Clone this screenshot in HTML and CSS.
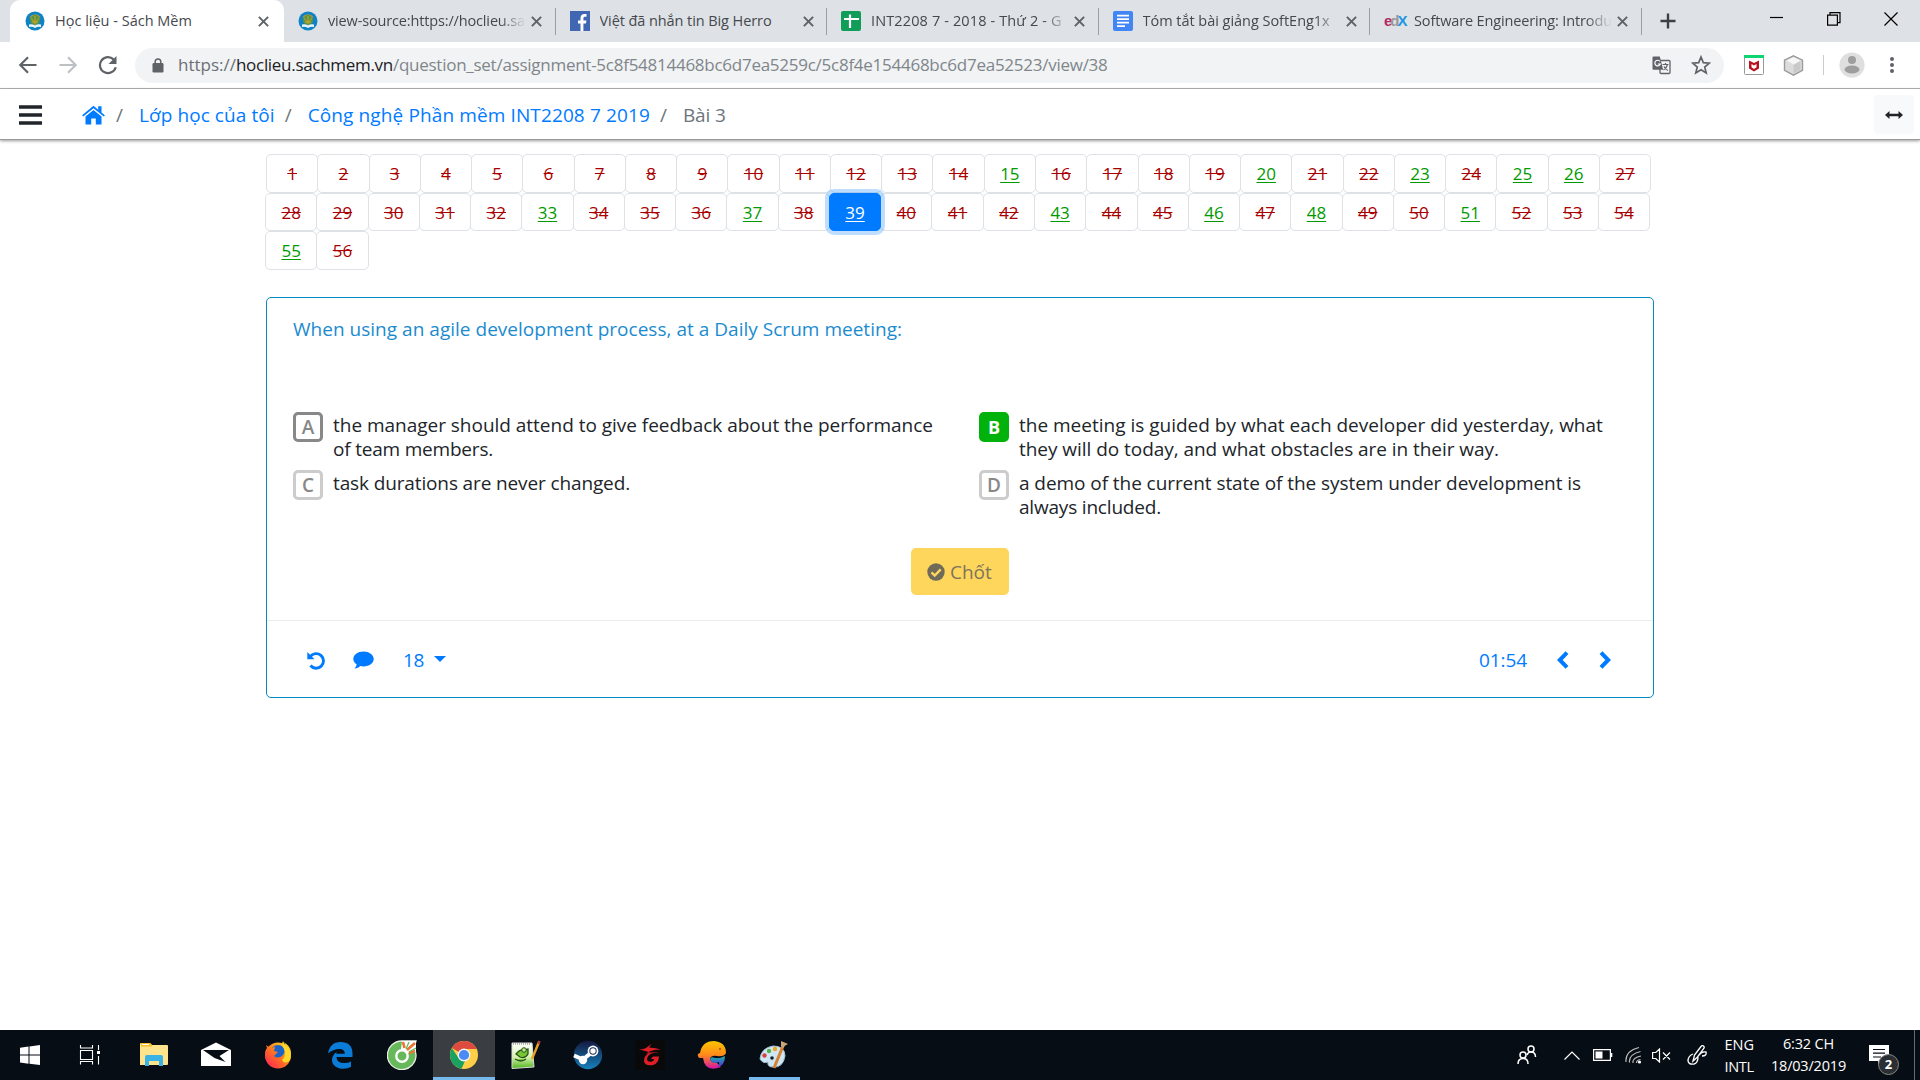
FILE: index.html
```html
<!DOCTYPE html>
<html lang="vi">
<head>
<meta charset="utf-8">
<title>Học liệu - Sách Mềm</title>
<link rel="stylesheet" href="styles.css">
</head>
<body>
<svg class="defs" width="0" height="0">
  <defs>
    <linearGradient id="fire" x1="0" y1="1" x2="1" y2="0"><stop offset="0" stop-color="#ff1f5a"/><stop offset=".5" stop-color="#ff7a1c"/><stop offset="1" stop-color="#fff02e"/></linearGradient>
    <linearGradient id="steam" x1="0" y1="0" x2="0" y2="1"><stop offset="0" stop-color="#14193f"/><stop offset="1" stop-color="#1681bd"/></linearGradient>
    <linearGradient id="whale" x1="0" y1="0" x2="0" y2="1"><stop offset="0" stop-color="#ffc400"/><stop offset=".5" stop-color="#ff8a1a"/><stop offset="1" stop-color="#d414a8"/></linearGradient>
    <linearGradient id="tail" x1="0" y1="0" x2="0" y2="1"><stop offset="0" stop-color="#18b5a8"/><stop offset="1" stop-color="#5a2be0"/></linearGradient>
    <linearGradient id="note" x1="0" y1="0" x2="0" y2="1"><stop offset="0" stop-color="#fff"/><stop offset=".55" stop-color="#d8f2b0"/><stop offset="1" stop-color="#4fb51c"/></linearGradient>
    <symbol id="book" viewBox="0 0 20 20"><circle cx="10" cy="10" r="9.500" fill="#0e84c4"/><path d="M4.500 6.500a6.500 6.500 0 0 1 11 0z" fill="#f39a1e"/><circle cx="10" cy="9" r="5" fill="#5c9440"/><path d="M6 7l4 5 4-5M10 5v9M7 11h6" stroke="#c9a22a" fill="none"/><path d="M4 13.500q3-1 6 1 3-2 6-1v2.500q-3-1-6 1-3-2-6-1z" fill="#eef6fb"/></symbol>
    <symbol id="x" viewBox="0 0 10 10"><path d="M.8.8l8.400 8.400M9.200.8L.8 9.200" stroke="#5f6368" stroke-width="1.800" fill="none"/></symbol>
  </defs>
</svg>

<header class="tabstrip">
  <div class="tab active"><svg class="fav" viewBox="0 0 20 20"><use href="#book"/></svg><span class="title"><span class="t1">Học liệu - Sách Mềm</span></span><svg class="close"><use href="#x"/></svg></div>
  <div class="tab"><svg class="fav" viewBox="0 0 20 20"><use href="#book"/></svg><span class="title fade"><span class="t2">view-source:https://hoclieu.sa</span></span><svg class="close"><use href="#x"/></svg></div>
  <div class="tab"><svg class="fav" viewBox="0 0 20 20"><path fill="#4267b2" d="M0 0h20v20H0z"/><path fill="#fff" d="M10.500 20v-7.500H8V9.500h2.500V7.200c0-2.700 1.600-4.100 4-4.100h2v2.700h-1.600c-1.200 0-1.500.6-1.500 1.600v2.100h3l-.4 3h-2.600V20z"/></svg><span class="title"><span class="t3">Việt đã nhắn tin Big Herro</span></span><svg class="close"><use href="#x"/></svg></div>
  <div class="tab"><svg class="fav" viewBox="0 0 20 20"><rect width="20" height="20" rx="2" fill="#0f9d58"/><path d="M9 3.500v13.500M3 8h15" stroke="#fff" stroke-width="2.200"/></svg><span class="title fade"><span class="t4">INT2208 7 - 2018 - Thứ 2 - G</span></span><svg class="close"><use href="#x"/></svg></div>
  <div class="tab"><svg class="fav" viewBox="0 0 20 20"><rect width="20" height="20" rx="2" fill="#4285f4"/><path d="M4 4.700h12M4 8.200h12M4 11.700h12M4 15.200h8" stroke="#fff" stroke-width="1.700"/></svg><span class="title fade"><span class="t5">Tóm tắt bài giảng SoftEng1x</span></span><svg class="close"><use href="#x"/></svg></div>
  <div class="tab"><span class="edx"><b>e</b><b>d</b><b>X</b></span><span class="title fade"><span class="t6">Software Engineering: Introdu</span></span><svg class="close"><use href="#x"/></svg></div>
  <svg class="plus" viewBox="0 0 16 16"><path d="M8 0.500v15M.5 8h15" stroke="#3c4043" stroke-width="2.400"/></svg>
  <div class="winctl">
    <svg width="14" height="14" viewBox="0 0 14 14"><path d="M0 5.500h13" stroke="#000" stroke-width="1.200"/></svg>
    <svg width="14" height="14" viewBox="0 0 14 14"><path d="M.6 3.100h9.800v10H.6zM3 3V.7h10v10h-2.500" fill="none" stroke="#000" stroke-width="1.200"/></svg>
    <svg width="14" height="14" viewBox="0 0 14 14"><path d="M.5.500l13 13M13.500.5l-13 13" fill="none" stroke="#000" stroke-width="1.200"/></svg>
  </div>
</header>

<div class="toolbar">
  <svg class="nav" viewBox="0 0 20 20"><path d="M18.500 10H2.500M10 2.300L2.300 10l7.700 7.700" fill="none" stroke="#5f6368" stroke-width="2.200"/></svg>
  <svg class="nav" viewBox="0 0 20 20"><path d="M1.500 10h16M10 2.300l7.700 7.700-7.700 7.700" fill="none" stroke="#bdc1c6" stroke-width="2.200"/></svg>
  <svg class="nav" viewBox="0 0 20 20"><path d="M17.700 12.200A8 8 0 1 1 15.600 4.400" fill="none" stroke="#5f6368" stroke-width="2.200"/><path d="M18.500 1v8h-8z" fill="#5f6368"/></svg>
  <div class="omnibox">
    <svg width="12" height="15" viewBox="0 0 12 15"><rect x=".5" y="5" width="11" height="9.500" rx="1.200" fill="#5f6368"/><path d="M3.200 6V3.700a2.800 2.800 0 0 1 5.600 0V6" fill="none" stroke="#5f6368" stroke-width="1.500"/></svg>
    <span class="url"><span class="u1">https://</span><span class="u2">hoclieu.sachmem.vn</span><span class="u3">/question_set/assignment-5c8f54814468bc6d7ea5259c/5c8f4e154468bc6d7ea52523/view/38</span></span>
    <svg class="translate" viewBox="0 0 19 19"><rect x="8" y="4.500" width="10" height="13" rx="1" fill="#f1f3f4" stroke="#5f6368" stroke-width="1.300"/><path d="M1.500.5h6.300l3.400 13.300H1.500a1 1 0 0 1-1-1V1.500a1 1 0 0 1 1-1z" fill="#5f6368"/><path d="M8 5.500A2.800 2.800 0 1 0 8.300 8H5.800" fill="none" stroke="#fff" stroke-width="1.200"/><path d="M10.500 8.500h6M13.500 7v1.500M15.500 8.500q-1 4-4 5.500M12 10.500q1.500 3 4 4" fill="none" stroke="#5f6368" stroke-width="1.200"/></svg>
    <svg class="star" viewBox="0 0 20 20"><path d="M10 2l2.300 5.600 6 .5-4.600 3.900 1.500 5.900-5.200-3.200-5.200 3.200 1.500-5.900L1.700 8.100l6-.5z" fill="none" stroke="#5f6368" stroke-width="1.700"/></svg>
  </div>
  <svg class="mcafee" viewBox="0 0 20 20"><rect x=".5" y=".5" width="19" height="19" rx="1" fill="#fff" stroke="#999"/><path d="M0 0h20v3H0z" fill="#0fd471"/><path d="M5 5.500l5 2.500 5-2.500v8l-5 3-5-3zM7.500 9v3.300L10 14l2.500-1.700V9L10 10.500z" fill="#b81420" fill-rule="evenodd"/></svg>
  <svg class="cube" viewBox="0 0 21 21"><path d="M10.500.8l9 4.300v10.300l-9 4.800-9-4.800V5.100z" fill="#dcdcdc" stroke="#9b9b9b" stroke-width="1.400"/><path d="M10.500 2.300l7 3.200-7 4-7-4z" fill="#f7f7f7"/><path d="M10.500 10v8.500l7-3.800V6.200z" fill="#c9c9c9"/></svg>
  <span class="vsep"></span>
  <svg class="avatar" viewBox="0 0 26 26"><circle cx="13" cy="13" r="12.600" fill="#dfdfdf"/><circle cx="13" cy="8" r="4" fill="#9e9e9e"/><ellipse cx="13" cy="17.500" rx="7.500" ry="4" fill="#9e9e9e"/></svg>
  <svg class="dots" viewBox="0 0 4 18"><circle cx="2" cy="3" r="2"/><circle cx="2" cy="9" r="2"/><circle cx="2" cy="15" r="2"/></svg>
</div>

<nav class="crumbs">
  <svg class="menu" viewBox="0 0 24 20"><path d="M0 2h23M0 10h23M0 18h23" stroke="#212529" stroke-width="3.300"/></svg>
  <svg class="home" viewBox="0 0 24 20"><path d="M12 .8L.6 10.300l1.100 1.300L12 3.200l10.300 8.400 1.100-1.300-3.400-2.800V1.300h-3.300v3.500z" fill="#007bff"/><path d="M12 4.900l8 6.500v8.100h-5.700v-6H9.700v6H4v-8.100z" fill="#007bff"/></svg>
  <span class="slash">/</span><span class="b1">Lớp học của tôi</span><span class="slash">/</span><span class="b2">Công nghệ Phần mềm INT2208 7 2019</span><span class="slash">/</span><span class="b3">Bài 3</span>
  <span class="widen"><svg width="18" height="8" viewBox="0 0 18 8"><path d="M0 4L4.500 0v2.700h9V0L18 4l-4.500 4V5.300h-9V8z" fill="#212529"/></svg></span>
</nav>

<main>
  <div class="pager">
    <div class="row r1"><i>1</i><i>2</i><i>3</i><i>4</i><i>5</i><i>6</i><i>7</i><i>8</i><i>9</i><i>10</i><i>11</i><i>12</i><i>13</i><i>14</i><i class="ok">15</i><i>16</i><i>17</i><i>18</i><i>19</i><i class="ok">20</i><i>21</i><i>22</i><i class="ok">23</i><i>24</i><i class="ok">25</i><i class="ok">26</i><i>27</i></div>
    <div class="row"><i>28</i><i>29</i><i>30</i><i>31</i><i>32</i><i class="ok">33</i><i>34</i><i>35</i><i>36</i><i class="ok">37</i><i>38</i><i class="ok now">39</i><i>40</i><i>41</i><i>42</i><i class="ok">43</i><i>44</i><i>45</i><i class="ok">46</i><i>47</i><i class="ok">48</i><i>49</i><i>50</i><i class="ok">51</i><i>52</i><i>53</i><i>54</i></div>
    <div class="row"><i class="ok">55</i><i>56</i></div>
  </div>

  <section class="card">
    <p class="question"><span class="q">When using an agile development process, at a Daily Scrum meeting:</span></p>
    <div class="options">
      <div class="opt"><b class="key picked">A</b><p><span class="a1">the manager should attend to give feedback about the performance</span><br><span class="a2">of team members.</span></p></div>
      <div class="opt"><b class="key right">B</b><p><span class="a3">the meeting is guided by what each developer did yesterday, what</span><br><span class="a4">they will do today, and what obstacles are in their way.</span></p></div>
      <div class="opt"><b class="key">C</b><p><span class="a5">task durations are never changed.</span></p></div>
      <div class="opt"><b class="key">D</b><p><span class="a6">a demo of the current state of the system under development is</span><br><span class="a7">always included.</span></p></div>
    </div>
    <button class="submit"><svg width="18" height="18" viewBox="0 0 18 18"><circle cx="9" cy="9" r="8.700" fill="#706b59"/><path d="M4.500 9.300l3.200 3.200 6-6.200" fill="none" stroke="#ffd65c" stroke-width="2.400"/></svg><span>Chốt</span></button>
    <footer class="foot">
      <svg class="undo" viewBox="0 0 18 19"><path d="M3.200 5.700A7.300 7.300 0 1 1 3.500 14.500" fill="none" stroke="#007bff" stroke-width="2.900"/><path d="M.3 1v7.300h7.200z" fill="#007bff"/></svg>
      <svg class="talk" viewBox="0 0 21 18"><path d="M10.500.5c5.700 0 10.200 3.300 10.200 7.500s-4.500 7.400-10.200 7.400c-1.200 0-2.300-.1-3.300-.4-1.300 1.200-3.300 2.500-5.700 2.500 1.200-1.200 2-2.700 2.100-4.200C1.600 12 .3 10.100.3 8 .3 3.800 4.800.5 10.500.5z" fill="#007bff"/></svg>
      <span class="count">18</span><svg class="caret" viewBox="0 0 12 6"><path d="M0 0h12L6 6z" fill="#007bff"/></svg>
      <span class="time">01:54</span>
      <svg class="chev" viewBox="0 0 12 18"><path d="M10 1.700L2.800 9l7.200 7.300" fill="none" stroke="#007bff" stroke-width="4"/></svg>
      <svg class="chev" viewBox="0 0 12 18"><path d="M2 1.700L9.200 9 2 16.300" fill="none" stroke="#007bff" stroke-width="4"/></svg>
    </footer>
  </section>
</main>

<div class="taskbar">
  <div class="app"><svg viewBox="0 0 30 30"><path d="M5 7.700l8.500-1.200v8H5zM14.500 6.400L25 5v9.500H14.500zM5 15.500h8.500v8.200L5 22.500zM14.500 15.500H25V25l-10.500-1.300z" fill="#fff"/></svg></div>
  <div class="app"><svg viewBox="0 0 30 30"><path d="M3.500 5v3h12V5M3.500 10.500h12v9h-12zM3.500 24.500v-3h12v3M21.500 5v5M21.500 16v8.500" fill="none" stroke="#fff" stroke-width="1.100"/><path d="M20 11h3v3h-3z" fill="#fff"/></svg></div>
  <div class="app"><svg viewBox="0 0 30 30"><path d="M1 4q0-1 1-1h9l2 2h15q1 0 1 1v18q0 1-1 1H1z" fill="#fde38c"/><path d="M2 3h9l2 2v1.500H2z" fill="#f6bd27"/><path d="M3 4.500h7" stroke="#fff"/><path d="M6 26V17q0-2 2-2h14q2 0 2 2v9h-4v-5H10v5z" fill="#39b2e5"/></svg></div>
  <div class="app"><svg viewBox="0 0 30 30"><path d="M0 10l15-7.500L30 10v16H0z" fill="#fff"/><path d="M2 10h26L18.500 16l6 6L13.500 18z" fill="#070d14"/></svg></div>
  <div class="app"><svg viewBox="0 0 30 30"><circle cx="15" cy="15.500" r="13" fill="url(#fire)"/><circle cx="15" cy="12.500" r="7.500" fill="#1b63c9"/><path d="M3 5l4 3 5-1-1 4 4 1-4 4q3 3 8 0 4-3 2-9 3-2-1-5 7 3 8 10 0 14-13 14Q3 26 2 15q0-5 2-7z" fill="url(#fire)"/><path d="M20 1q1 4 5 7 4 5 2 12-5 5-8 0 5-4 2-11-3-4-1-8z" fill="#ffd82c"/></svg></div>
  <div class="app"><svg viewBox="0 0 30 30"><path d="M3 13.500Q5 2 15.500 2 27 2 27.500 13v4h-16q0 6 8 6 4 0 6.500-1.500v5.500q-4 1.700-8 1.700C9 28.700 5 22 8 16q1.500-3 4-4.300-.8 1-.8 2h8.600q0-4.800-5.300-4.800Q8 8.900 3 13.500z" fill="#0b7bd8"/></svg></div>
  <div class="app"><svg viewBox="0 0 30 30"><path d="M15 1h14l-1.500 5L29 15A14.300 14.300 0 1 1 15 1z" fill="#66b85a" stroke="#e9efe7" stroke-width="1.300"/><path d="M15 1h14v11l-9 1-6-4z" fill="#fff"/><path d="M16 2l1.500 6M28 3l-8 7M28 11l-6 2" stroke="#ee7330" stroke-width="2.600"/><path d="M22 2l-3 7M29 8l-7 4" stroke="#66b85a" stroke-width="1.300"/><circle cx="15" cy="16" r="5.700" fill="#66b85a" stroke="#fff" stroke-width="2.400"/></svg></div>
  <div class="app on"><svg viewBox="0 0 30 30"><circle cx="15" cy="15" r="14" fill="#ffcf48"/><path d="M15 15L2.900 8A14 14 0 0 1 27.600 9H15z" fill="#dd4b3e"/><path d="M2.900 8l7 10.500L16 21l-3.500 7.800A14 14 0 0 1 2.900 8z" fill="#1aa260"/><circle cx="15" cy="15" r="6.400" fill="#f4f4f4"/><circle cx="15" cy="15" r="5.100" fill="#4a8af4"/></svg></div>
  <div class="app"><svg viewBox="0 0 30 30"><path d="M1 3h20l2 24-22 1.500z" fill="url(#note)" stroke="#d8d8d8"/><path d="M2 4h18" stroke="#777" stroke-dasharray="1 1"/><path d="M5 14q4-5 8-4l4-1v5q-3 5-8 3zM4 19q6 4 11 0" fill="#75c832" stroke="#28501c" stroke-width="1.300"/><circle cx="13" cy="10" r="2.300" fill="#b8e985" stroke="#28501c"/><path d="M28 2L21 19" stroke="#e6a125" stroke-width="2.400"/><path d="M28.500 1l-1 3" stroke="#b53c37" stroke-width="2.400"/></svg></div>
  <div class="app"><svg viewBox="0 0 30 30"><circle cx="15" cy="15" r="14.200" fill="url(#steam)"/><path d="M1 15.500l9 4 6-5 3-4" fill="none" stroke="#fff" stroke-width="4"/><circle cx="10" cy="20" r="4.200" fill="#fff"/><circle cx="20" cy="11" r="5.400" fill="#fff"/><circle cx="20" cy="11" r="3.700" fill="#1a3159"/><circle cx="20" cy="11" r="2.700" fill="#fff"/></svg></div>
  <div class="app"><svg viewBox="0 0 30 30"><path fill="#090909" d="M0 0h30v30H0z"/><path d="M4 9.500q7 0 12-5.500-.5 2-2 3.500 7 .5 12 2-11 0-15 4.500 5-2.500 13-2-11 .8-12 6.500 0 4 5 3 2-.5 2-2.500h-3l2-2.500h6q-.5 7-6 8.500-8 1.500-9-4-.5-5.500 6-8.500-4-1.500-11-3z" fill="#e01e26"/></svg></div>
  <div class="app"><svg viewBox="0 0 30 30"><path d="M2 18Q-1 14 3 13 5 1 17 1q12 1 12 12-2 4-9 3-6-1-7 3 1 4 7 4l4 4q-16 6-18-9z" fill="url(#whale)"/><path d="M13 19q1-3 5-1h5l5-2q0 10-8 11 3-3 2-5-7 3-9-3z" fill="url(#tail)"/><circle cx="23" cy="9" r=".8" fill="#3a2205"/></svg></div>
  <div class="app run"><svg viewBox="0 0 30 30"><path d="M1 19Q2 8 14 6q12 0 12 10-2 12-12 11-6 0-5-5-5 2-8-3z" fill="#cfe6f3" stroke="#9fc3d6"/><circle cx="5.500" cy="15.500" r="2.200" fill="#d8433c"/><circle cx="10" cy="11" r="2.200" fill="#54b04b"/><circle cx="16" cy="9" r="2.200" fill="#f2a424"/><circle cx="13" cy="18" r="1.800" fill="#132030"/><path d="M24 6L15 28" stroke="#d98232" stroke-width="3"/><path d="M22 1q5 2 7 3-3 1-5 4l-2-2z" fill="#c8a67c"/></svg></div>
  <div class="tray">
    <svg class="ppl" viewBox="0 0 20 20"><g fill="none" stroke="#fff" stroke-width="1.500"><circle cx="6" cy="10" r="3"/><path d="M1 19q0-5.500 5-5.500T11 19"/><circle cx="14" cy="4" r="3"/><path d="M10 10q1-3 4-3 4.500 0 4.500 5"/></g></svg>
    <svg class="up" viewBox="0 0 16 9"><path d="M.5 8.500L8 1l7.500 7.500" fill="none" stroke="#fff" stroke-width="1.200"/></svg>
    <svg class="bat" viewBox="0 0 20 12"><path d="M.6.600h16.800v10.800H.6z" fill="none" stroke="#fff" stroke-width="1.200"/><path d="M2.500 2.500h7v7h-7zM18 4h1.300v4H18z" fill="#fff"/></svg>
    <svg class="wifi" viewBox="0 0 17 18"><g fill="none" stroke="#bbb" stroke-width="1.200"><path d="M1 16Q0 5 14 1.500M4.500 16.500q-1-8 11-11M8 17q-1-5 8-7M11.500 17q0-3 4-3.500"/></g><circle cx="14.500" cy="16" r="1.600" fill="#fff"/></svg>
    <svg class="vol" viewBox="0 0 19 15"><path d="M.6 4.500h3.200L7.500 1v13l-3.700-3.500H.6zM11 4.500l7 7M18 4.500l-7 7" fill="none" stroke="#fff" stroke-width="1.200"/></svg>
    <svg class="pen" viewBox="0 0 20 20"><path d="M6 16L7.500 10 14 1.500q1-1.500 2.500-.5 1.200 1 .3 2.500L10.500 12 6 16zM6 9q-5 2-5 7 1 4 6 3 4-1 4-7M12 10q3-4 7-3 1 4-4 4" fill="none" stroke="#fff" stroke-width="1.300"/></svg>
    <div class="lang"><span>ENG</span><span class="l2">INTL</span></div>
    <div class="clock"><span class="k1">6:32 CH</span><span class="k2">18/03/2019</span></div>
    <div class="notif"><svg width="20" height="20" viewBox="0 0 20 20"><path d="M0 0h20v16h-7l-4 4v-4H0z" fill="#fff"/><path d="M4 4.500h12M4 8.200h12M4 12h8" stroke="#070d14" stroke-width="1.200"/></svg><b>2</b></div>
    <span class="edge"></span>
  </div>
</div>
</body>
</html>
```
FILE: styles.css
```css
* { box-sizing: border-box; }
body { margin: 0; width: 1920px; height: 1080px; overflow: hidden; background: #fff; color: #212529; font-family: "Open Sans", "Noto Sans", sans-serif; display: flex; flex-direction: column; }
svg { display: block; flex: none; }
.defs { position: absolute; }
p { margin: 0; }
span { white-space: nowrap; }

/* browser tabs */
.tabstrip { height: 42px; background: #dee1e6; display: flex; flex: none; padding-left: 10px; font-size: 14.5px; color: #45494d; }
.tab { width: 271.5px; flex: none; display: flex; align-items: center; padding-left: 14px; border-right: 1.500px solid #9b9fa4; border-image: linear-gradient(#dee1e6 9px, #9b9fa4 9px, #9b9fa4 34px, #dee1e6 34px) 1; }
.tab.active { width: 274px; background: #fff; border: 0; border-radius: 10px 10px 0 0; padding-left: 15px; }
.fav { width: 20px; height: 20px; }
.title { width: 198px; margin: 0 5px 0 10px; overflow: hidden; line-height: 22px; }
.fade { -webkit-mask-image: linear-gradient(90deg, #000 172px, transparent 198px); }
.close { width: 11px; height: 11px; }
.t2 { letter-spacing: -.150px; }
.t3 { letter-spacing: -.080px; }
.t4 { letter-spacing: .130px; }
.t5 { letter-spacing: -.030px; }
.t6 { letter-spacing: -.140px; }
.edx { width: 20px; font: bold 15px/20px "Liberation Sans", sans-serif; letter-spacing: -2px; color: #b52a67; }
.edx b:nth-child(2) { color: #999; }
.edx b:nth-child(3) { color: #2097e4; }
.plus { width: 16px; height: 16px; margin: 13px 0 0 18px; }
.winctl { display: flex; gap: 43px; margin: 12px 22px 0 auto; }

/* address bar */
.toolbar { height: 47px; flex: none; display: flex; align-items: center; border-bottom: 1px solid #b4b4b6; padding: 0 25px 0 18px; }
.nav { width: 20px; height: 20px; margin-right: 20px; }
.omnibox { width: 1589px; height: 35px; border-radius: 18px; background: #f1f3f4; display: flex; align-items: center; padding: 0 13px 0 17px; margin-left: -3px; flex: none; }
.url { margin-left: 14px; margin-right: auto; font-size: 17px; color: #80868b; line-height: 24px; }
.u1 { color: #6a6f74; }
.u2 { color: #202124; letter-spacing: -.300px; }
.u3 { letter-spacing: -.260px; }
.translate { width: 19px; height: 19px; margin-right: 20px; }
.star { width: 20px; height: 20px; }
.mcafee { width: 20px; height: 20px; margin-left: 20px; }
.cube { width: 21px; height: 21px; margin-left: 19px; }
.vsep { width: 1px; height: 20px; background: #ccc; margin-left: 19px; }
.avatar { width: 26px; height: 26px; margin-left: 15px; }
.dots { width: 4px; height: 18px; margin-left: 25px; fill: #5f6368; }

/* breadcrumb */
.crumbs { height: 51px; flex: none; display: flex; align-items: center; padding-left: 19px; font-size: 19px; line-height: 24px; color: #007bff; border-bottom: 1.500px solid #999; box-shadow: 0 1px 3px rgba(0,0,0,.4); }
.crumbs > svg, .widen { position: relative; top: .500px; }
.crumbs > span { padding-top: 1px; }
.menu { width: 24px; height: 20px; }
.home { width: 25px; height: 20px; margin-left: 38px; }
.slash, .b3 { color: #6c757d; }
.slash { width: 7px; margin: 0 16px 0 10px; }
.b1 { letter-spacing: .080px; }
.b2 { letter-spacing: .120px; }
.b3 { letter-spacing: -.100px; }
.crumbs > .widen { width: 40px; height: 39px; border-radius: 4px; background: #f8f9fa; margin: 0 6px 0 auto; display: flex; align-items: center; justify-content: center; }

/* question numbers */
main { width: 1388px; margin: 14px auto 0; flex: 1; }
.pager { height: 143px; font-size: 17px; }
.row { display: flex; height: 38.500px; margin-left: -1px; }
.r1 { margin-left: 0; }
.row i { width: 52.280px; height: 38.500px; margin-right: -1px; border: 1px solid #dee2e6; border-radius: 5px; font-style: normal; line-height: 38px; text-align: center; color: #a80000; text-decoration: line-through; flex: none; }
.row .ok { color: #009a00; text-decoration: underline; text-underline-offset: 2px; }
.row .now { background: #007bff; border-color: #007bff; color: #fff; box-shadow: 0 0 0 4px rgba(0,123,255,.25); position: relative; }

/* question card */
.card { height: 401px; border: 1.250px solid #0787c3; border-radius: 5px; font-size: 19px; line-height: 24px; display: flex; flex-direction: column; }
.question { color: #1b8bd0; padding: 19px 26px 0; height: 114px; }
.q { letter-spacing: .021px; }
.options { display: grid; grid-template-columns: 686px 1fr; grid-template-rows: 58px 58px; padding-left: 26px; }
.opt { display: flex; gap: 10px; }
.opt p { padding-top: 1px; }
.a1 { letter-spacing: -.021px; }
.a2 { letter-spacing: -.200px; }
.a4 { letter-spacing: -.044px; }
.a5 { letter-spacing: -.128px; }
.a6 { letter-spacing: -.066px; }
.a7 { letter-spacing: -.191px; }
.key { width: 30px; height: 30px; border: 3px solid #ccc; border-radius: 5px; color: #888; text-align: center; font-size: 19px; font-weight: 600; line-height: 25px; }
.picked { border-color: #888; }
.right { background: #00b20b; border-color: #00b20b; color: #fff; font-weight: 700; font-size: 18px; }
.submit { align-self: center; width: 98px; height: 47px; margin-top: 20px; border: 0; border-radius: 5px; background: #ffd65c; color: #7d745c; font: 19px "Open Sans", sans-serif; display: flex; align-items: center; gap: 5px; padding: 0 0 0 16px; }
.foot { margin-top: 25px; border-top: 1px solid #eaecee; height: 77px; display: flex; align-items: center; padding: 2px 42px 0 40px; color: #007bff; }
.undo { width: 18px; height: 19px; }
.talk { width: 21px; height: 18px; margin-left: 28px; }
.count { margin-left: 29px; letter-spacing: -.400px; }
.caret { width: 12px; height: 6px; margin: -3px auto 0 10px; }
.time { letter-spacing: -.100px; }
.chev { width: 12px; height: 18px; margin-left: 30px; }

/* taskbar */
.taskbar { height: 50px; flex: none; background: #070d14; display: flex; color: #fff; }
.app { width: 62px; height: 50px; display: flex; align-items: center; justify-content: center; flex: none; }
.app:first-child { margin-left: -1px; }
.app svg { width: 30px; height: 30px; }
.on { background: #3a3e43; box-shadow: inset 0 -3px #76b9ed; }
.run { background: linear-gradient(#76b9ed, #76b9ed) 50% 100% / 51px 3px no-repeat; }
.tray { margin-left: auto; display: flex; align-items: center; font-size: 14.500px; }
.ppl { width: 20px; height: 20px; }
.up { width: 16px; height: 9px; margin-left: 27px; }
.bat { width: 20px; height: 12px; margin-left: 13px; }
.wifi { width: 17px; height: 18px; margin-left: 12px; }
.vol { width: 19px; height: 15px; margin-left: 10px; }
.pen { width: 20px; height: 20px; margin-left: 16px; }
.lang, .clock { display: flex; flex-direction: column; line-height: 22px; align-items: center; }
.l2 { letter-spacing: -.300px; }
.k1, .k2 { letter-spacing: -.190px; }
.lang { margin-left: 17px; padding-top: 1px; }
.clock { margin-left: 17px; }
.notif { position: relative; margin-left: 23px; }
.notif b { position: absolute; left: 9px; top: 9px; width: 21px; height: 21px; border: 1px solid #888; border-radius: 50%; background: #2b2e33; font-size: 13px; line-height: 19px; text-align: center; }
.edge { width: 1px; height: 50px; background: #666a6e; margin: 0 5px 0 25px; }
```
